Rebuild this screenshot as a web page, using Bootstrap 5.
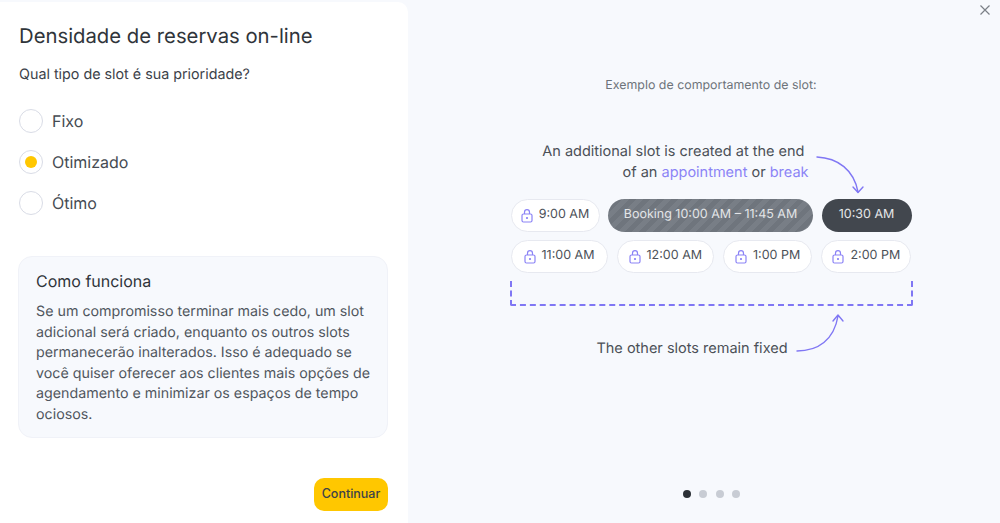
<!DOCTYPE html>
<html lang="pt">
<head>
  <meta charset="UTF-8" />
  <title>Densidade de reservas on-line</title>
  <link href="https://cdn.jsdelivr.net/npm/bootstrap@5.3.0/dist/css/bootstrap.min.css" rel="stylesheet" />
  <style>
    html, body { height: 523px; overflow: hidden; }
    body { font-family: Inter, "Liberation Sans", sans-serif; background: #f7f9fd; color: #3c4249; text-rendering: geometricPrecision; }
    .shell { height: 523px; }
    .left-pane { width: 408px; margin-top: 2px; background: #fff; border-top-right-radius: 10px; padding: 20px 20px 12px 19px; }
    .pane-title { font-size: 20.3px; font-weight: 400; line-height: 28px; color: #2f343a; margin: 0 0 14px; }
    .pane-question { font-size: 14.3px; line-height: 22px; margin: 0 0 23px; }
    .opt { height: 24px; margin-bottom: 17px; font-size: 16px; color: #454b52; gap: 9px; }
    .opt-dot { width: 24px; height: 24px; border: 1px solid #d9dce6; border-radius: 50%; background: #fff; }
    .opt-dot.on::after { content: ""; width: 12px; height: 12px; border-radius: 50%; background: #ffc700; }
    .how-box { margin: 41px 0 0 -1px; width: 370px; height: 182px; background: #f7f9fd; border: 1px solid #f0f2f8; border-radius: 14px; padding: 12px 14px 12px 17px; }
    .how-title { font-size: 16px; font-weight: 400; line-height: 24px; color: #2f343a; margin: 0 0 9px; }
    .how-text { font-size: 14.25px; line-height: 20.6px; color: #50565d; margin: 0; }
    .go-btn { background: #ffc700; border: 0; border-radius: 10px; width: 74px; height: 33px; padding: 0; font-size: 12.5px; font-weight: 500; color: #3c4249; }
    .go-row { margin-top: 40px; width: 369px; }
    .right-pane { position: relative; padding-left: 14px; }
    .close-x { position: absolute; top: 4px; right: 9px; width: 12px; height: 12px; line-height: 0; }
    .example-label { font-size: 12.4px; line-height: 18px; color: #6d737a; margin-top: 76px; margin-bottom: 47px; }
    .stage { position: relative; width: 403px; }
    .note { font-size: 14.5px; line-height: 21px; color: #4b5057; }
    .note-top { margin-bottom: 16px; width: 299px; }
    .note-first { padding-right: 4px; }
    .note-top span { color: #8b83f6; }
    .slot-row { gap: 8.5px; margin-bottom: 8px; padding-left: 1px; }
    .slot-row-wide { gap: 9.3px; }
    .slot { height: 33px; border-radius: 17px; background: #fff; border: 1px solid #e7e9f0; font-size: 12.5px; color: #4b5057; gap: 6px; }
    .slot svg { width: 12px; height: 14px; }
    .slot-w89 { width: 89px; }
    .slot-w90 { width: 90px; }
    .slot-w97 { width: 97px; }
    .slot-booking { width: 205px; border: 0; color: #e3e5e8; background: repeating-linear-gradient(135deg, #787e86 0 5px, #6f757d 5px 10px); }
    .slot-now { width: 90px; border: 0; color: #e6e8ea; background: #42474e; }
    .dash-box { height: 25px; border: 2px dashed #8077f4; border-top: 0; border-radius: 0 0 2px 2px; }
    .note-bottom { margin-top: 32px; padding-right: 38px; text-align: center; }
    .arrow { position: absolute; width: 50px; height: 42px; }
    .arrow-top { left: 306px; top: 11px; }
    .arrow-bottom { left: 286px; top: 171px; }
    .pager { position: absolute; left: 275px; top: 490px; gap: 8.300px; }
    .pager i { display: block; width: 8px; height: 8px; border-radius: 50%; background: #c8ccd4; }
    .pager i.on { background: #2b3036; }
  </style>
</head>
<body>
  <div class="shell d-flex">
    <div class="left-pane flex-shrink-0">
      <h1 class="pane-title">Densidade de reservas on-line</h1>
      <p class="pane-question">Qual tipo de slot é sua prioridade?</p>

      <div class="opt d-flex align-items-center"><span class="opt-dot d-flex align-items-center justify-content-center"></span>Fixo</div>
      <div class="opt d-flex align-items-center"><span class="opt-dot on d-flex align-items-center justify-content-center"></span>Otimizado</div>
      <div class="opt d-flex align-items-center"><span class="opt-dot d-flex align-items-center justify-content-center"></span>Ótimo</div>

      <div class="how-box">
        <h2 class="how-title">Como funciona</h2>
        <p class="how-text">Se um compromisso terminar mais cedo, um slot adicional será criado, enquanto os outros slots permanecerão inalterados. Isso é adequado se você quiser oferecer aos clientes mais opções de agendamento e minimizar os espaços de tempo ociosos.</p>
      </div>

      <div class="go-row d-flex justify-content-end">
        <button class="go-btn" type="button">Continuar</button>
      </div>
    </div>

    <div class="right-pane flex-grow-1 d-flex flex-column align-items-center">
      <span class="close-x">
        <svg width="12" height="12" viewBox="0 0 12 12" fill="none" stroke="#7b8087" stroke-width="1.2"><path d="M1.5 1.5l9 9M10.5 1.5l-9 9"/></svg>
      </span>
      <div class="example-label">Exemplo de comportamento de slot:</div>

      <div class="stage">
        <div class="note note-top text-end">
          <div class="note-first">An additional slot is created at the end</div>
          of an <span>appointment</span> or <span>break</span>
        </div>

        <svg class="arrow arrow-top" viewBox="0 0 50 42" fill="none" stroke="#8077f4" stroke-width="1.4" stroke-linecap="round" stroke-linejoin="round">
          <path d="M1 5C22 6 38 18 42 40"/>
          <path d="M37 35L42 40.5L47 35"/>
        </svg>

        <div class="d-flex slot-row">
          <div class="slot slot-w89 d-flex align-items-center justify-content-center"><svg viewBox="0 0 12 14" fill="none" stroke="#8b83f6" stroke-width="1.2"><rect x="1" y="5" width="10" height="8" rx="1.5"/><path d="M3.5 5V3.200a2.500 2.500 0 0 1 5 0V5"/><circle cx="6" cy="9" r=".5" fill="#8b83f6"/></svg>9:00 AM</div>
          <div class="slot slot-booking d-flex align-items-center justify-content-center">Booking 10:00 AM – 11:45 AM</div>
          <div class="slot slot-now d-flex align-items-center justify-content-center">10:30 AM</div>
        </div>
        <div class="d-flex slot-row slot-row-wide">
          <div class="slot slot-w97 d-flex align-items-center justify-content-center"><svg viewBox="0 0 12 14" fill="none" stroke="#8b83f6" stroke-width="1.2"><rect x="1" y="5" width="10" height="8" rx="1.5"/><path d="M3.5 5V3.200a2.500 2.500 0 0 1 5 0V5"/><circle cx="6" cy="9" r=".5" fill="#8b83f6"/></svg>11:00 AM</div>
          <div class="slot slot-w97 d-flex align-items-center justify-content-center"><svg viewBox="0 0 12 14" fill="none" stroke="#8b83f6" stroke-width="1.2"><rect x="1" y="5" width="10" height="8" rx="1.5"/><path d="M3.5 5V3.200a2.500 2.500 0 0 1 5 0V5"/><circle cx="6" cy="9" r=".5" fill="#8b83f6"/></svg>12:00 AM</div>
          <div class="slot slot-w89 d-flex align-items-center justify-content-center"><svg viewBox="0 0 12 14" fill="none" stroke="#8b83f6" stroke-width="1.2"><rect x="1" y="5" width="10" height="8" rx="1.5"/><path d="M3.5 5V3.200a2.500 2.500 0 0 1 5 0V5"/><circle cx="6" cy="9" r=".5" fill="#8b83f6"/></svg>1:00 PM</div>
          <div class="slot slot-w90 d-flex align-items-center justify-content-center"><svg viewBox="0 0 12 14" fill="none" stroke="#8b83f6" stroke-width="1.2"><rect x="1" y="5" width="10" height="8" rx="1.5"/><path d="M3.5 5V3.200a2.500 2.500 0 0 1 5 0V5"/><circle cx="6" cy="9" r=".5" fill="#8b83f6"/></svg>2:00 PM</div>
        </div>
        <div class="dash-box"></div>

        <svg class="arrow arrow-bottom" viewBox="0 0 50 42" fill="none" stroke="#8077f4" stroke-width="1.4" stroke-linecap="round" stroke-linejoin="round">
          <path d="M1 39C22 39 38 28 42 4"/>
          <path d="M37 9L42 3L47 9"/>
        </svg>

        <div class="note note-bottom">The other slots remain fixed</div>
      </div>

      <div class="pager d-flex">
        <i class="on"></i><i></i><i></i><i></i>
      </div>
    </div>
  </div>
  <script src="https://cdn.jsdelivr.net/npm/bootstrap@5.3.0/dist/js/bootstrap.bundle.min.js"></script>
</body>
</html>
